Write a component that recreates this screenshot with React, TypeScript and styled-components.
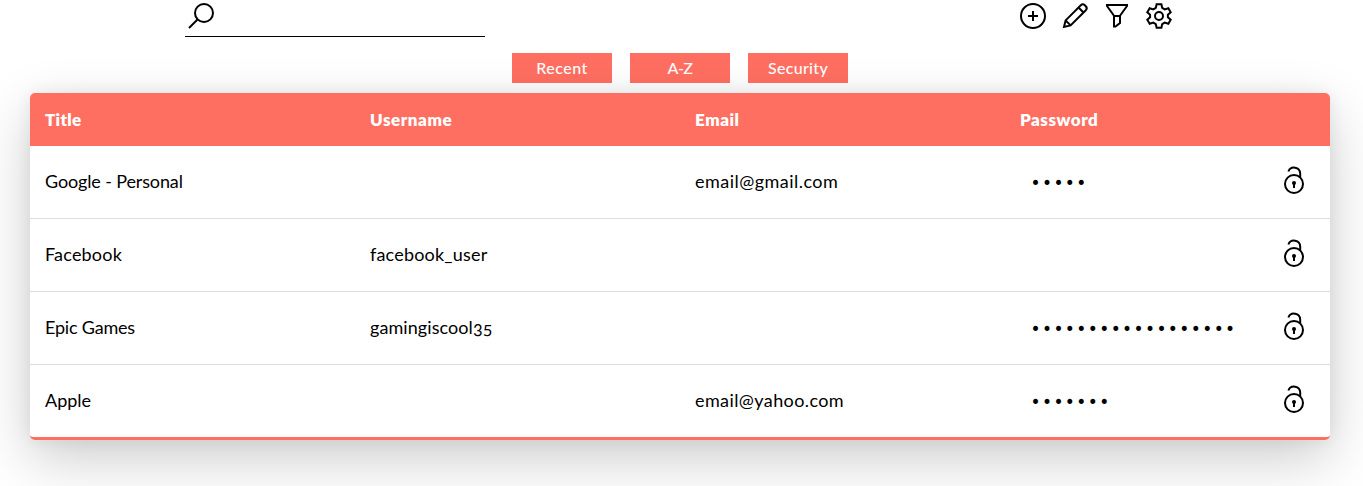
import React from 'react';
import styled, { createGlobalStyle } from 'styled-components';

const GlobalStyle = createGlobalStyle`
  * { box-sizing: border-box; }
  body {
    margin: 0;
    background: #fff;
    color: #000;
    font-family: Candara, Lato, "Open Sans", sans-serif;
    font-variant-numeric: oldstyle-nums;
    overflow: hidden;
  }
`;

const Page = styled.main`
  display: flex;
  flex-direction: column;
  height: 486px;
  overflow: hidden;
`;

const Toolbar = styled.header`
  display: flex;
  justify-content: space-between;
  align-items: flex-start;
  height: 37px;
  padding: 0 188px 0 185px;
`;

const SearchBox = styled.label`
  display: flex;
  width: 300px;
  height: 37px;
  border-bottom: 1px solid #000;
`;

const Actions = styled.div`
  display: flex;
  gap: 10px;
`;

const IconButton = styled.button`
  display: block;
  width: 32px;
  height: 32px;
  padding: 0;
  border: 0;
  background: none;
`;

const Icon = styled.svg`
  display: block;
  width: 32px;
  height: 32px;
  fill: none;
  stroke: #000;
  stroke-width: 2;
`;

const Sorting = styled.nav`
  display: flex;
  justify-content: center;
  gap: 18px;
  margin: 16px 3px 10px 0;
`;

const SortButton = styled.button<{ $tracking: number }>`
  width: 100px;
  height: 30px;
  padding: 0 0 1px;
  border: 0;
  background: #ff6f61;
  color: #fff;
  font: 500 16px/29px Candara, Lato, sans-serif;
  letter-spacing: ${(p) => p.$tracking}px;
`;

const Table = styled.section`
  width: 1300px;
  margin-left: 30px;
  border-radius: 5px;
  border-bottom: 3px solid #ff6f61;
  background: #fff;
  overflow: hidden;
  box-shadow: 0 19px 56px rgba(0, 0, 0, 0.2), 0 0 16px rgba(0, 0, 0, 0.07);
`;

const Row = styled.div`
  display: grid;
  grid-template-columns: repeat(4, 325px);
  align-items: center;
  height: 73px;
  border-bottom: 1px solid #ddd;
  font-size: 18px;
  &:last-child {
    height: 72px;
    border-bottom: 0;
  }
`;

const Cell = styled.div<{ $tracking?: number }>`
  padding: 0 0 2px 15px;
  white-space: pre;
  letter-spacing: ${(p) => p.$tracking ?? 0}px;
`;

const HeadRow = styled(Row)`
  height: 53px;
  border: 0;
  background: #ff6f61;
  color: #fff;
  font-size: 17px;
  font-weight: 800;
  ${Cell} {
    padding-bottom: 0;
  }
`;

const PasswordCell = styled.div`
  display: flex;
  align-items: center;
  justify-content: space-between;
  padding: 0 20px 0 27px;
`;

const Dots = styled.span`
  font: 17px/20px "DejaVu Sans", sans-serif;
  margin: 2px 0 0 -1.5px;
  letter-spacing: 1.42px;
`;

const entries = [
  { title: 'Google - Personal', user: '', email: 'email@gmail.com', length: 5 },
  { title: 'Facebook', user: 'facebook_user', email: '', length: 0 },
  { title: 'Epic Games', user: 'gamingiscool35', email: '', length: 18 },
  { title: 'Apple', user: '', email: 'email@yahoo.com', length: 7 },
];

const tracking: Record<string, number> = {
  Title: 0.3,
  Username: 0.55,
  Email: 0.55,
  Password: 0.5,
  'Google - Personal': -0.13,
  Facebook: 0.2,
  'Epic Games': -0.2,
  facebook_user: 0.2,
  gamingiscool35: 0.07,
  'email@gmail.com': 0.47,
  'email@yahoo.com': 0.4,
};

function Lock() {
  return (
    <Icon viewBox="0 0 32 32">
      <circle cx="16" cy="18" r="9" />
      <path d="M10.4 5.5A6.1 6.1 0 0 1 22.2 7.5V11" />
      <circle cx="16" cy="17" r="2" fill="#000" stroke="none" />
      <path d="M16 17v5" />
    </Icon>
  );
}

export default function App() {
  return (
    <>
      <GlobalStyle />
      <Page>
        <Toolbar>
          <SearchBox aria-label="Search">
            <Icon viewBox="0 0 32 32">
              <circle cx="19" cy="13" r="9" />
              <path d="M12.5 19.5 4 28" />
            </Icon>
          </SearchBox>
          <Actions>
            <IconButton aria-label="Add">
              <Icon viewBox="0 0 32 32">
                <circle cx="16" cy="16" r="12" />
                <path d="M16 11v10M11 16h10" />
              </Icon>
            </IconButton>
            <IconButton aria-label="Edit">
              <Icon viewBox="0 0 32 32">
                <path d="M5 27l1.6-6.6L21.8 5.2a2.9 2.9 0 0 1 4 0l1 1a2.9 2.9 0 0 1 0 4L11.6 25.4 5 27zM6.6 20.4l5 5M19.5 7.5l5 5" />
              </Icon>
            </IconButton>
            <IconButton aria-label="Filter">
              <Icon viewBox="0 0 32 32">
                <path d="M6 5h20v1l-7 9.7V23l-4.5 3.5H13V15.7L6 6z" />
                <path d="M13 16h6" />
              </Icon>
            </IconButton>
            <IconButton aria-label="Settings">
              <Icon viewBox="0 0 32 32">
                <path d="M13.6 4.2h4.8l.8 3.7 2.5 1.5 3.6-1.2 2.4 4.1-2.8 2.5v2.4l2.8 2.5-2.4 4.1-3.6-1.2-2.5 1.5-.8 3.7h-4.8l-.8-3.7-2.5-1.5-3.6 1.2-2.4-4.1 2.8-2.5v-2.4l-2.8-2.5 2.4-4.1 3.6 1.2 2.5-1.5z" />
                <circle cx="16" cy="16" r="4" />
              </Icon>
            </IconButton>
          </Actions>
        </Toolbar>
        <Sorting>
          <SortButton $tracking={0.5}>Recent</SortButton>
          <SortButton $tracking={-0.5}>A-Z</SortButton>
          <SortButton $tracking={0.3}>Security</SortButton>
        </Sorting>
        <Table>
          <HeadRow>
            {['Title', 'Username', 'Email', 'Password'].map((name) => (
              <Cell key={name} $tracking={tracking[name]}>{name}</Cell>
            ))}
          </HeadRow>
          {entries.map((entry) => (
            <Row key={entry.title}>
              <Cell $tracking={tracking[entry.title]}>{entry.title}</Cell>
              <Cell $tracking={tracking[entry.user]}>{entry.user}</Cell>
              <Cell $tracking={tracking[entry.email]}>{entry.email}</Cell>
              <PasswordCell>
                <Dots>{'•'.repeat(entry.length)}</Dots>
                <Lock />
              </PasswordCell>
            </Row>
          ))}
        </Table>
      </Page>
    </>
  );
}
